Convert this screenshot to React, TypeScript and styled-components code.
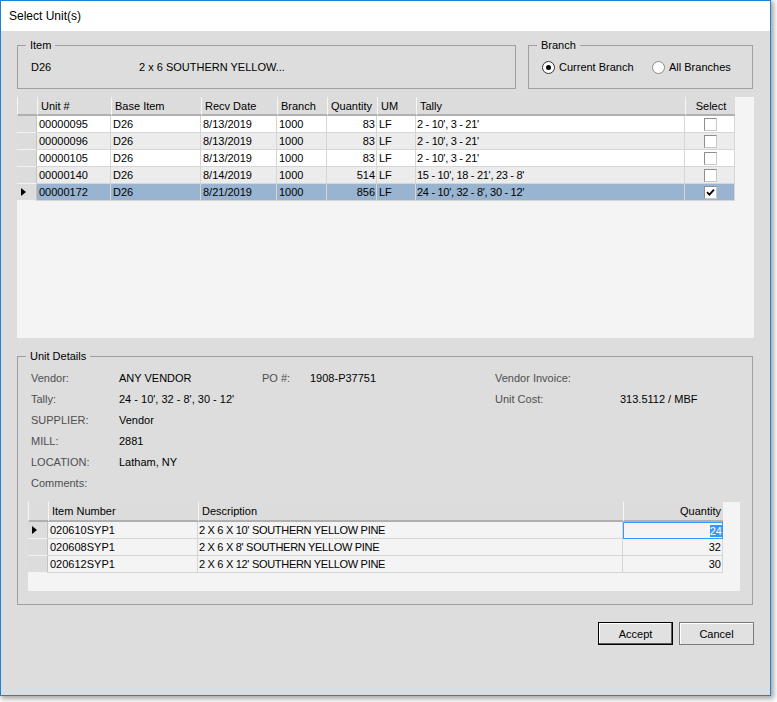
import styled, { createGlobalStyle } from "styled-components";

const GlobalStyle = createGlobalStyle`
  html, body {
    margin: 0;
    padding: 0;
    background: #ffffff;
  }
  body {
    font-family: "Liberation Sans", Arial, sans-serif;
    font-size: 11px;
    color: #000000;
  }
`;

type Tone = "white" | "alt" | "selected" | "light";

const TONES: Record<Tone, string> = {
  white: "#ffffff",
  alt: "#ececec",
  selected: "#99b4d1",
  light: "#f4f4f4",
};

const Screen = styled.div`
  width: 777px;
  height: 702px;
  background: #ffffff;
  overflow: hidden;
`;

const Window = styled.div`
  width: 771px;
  height: 696px;
  box-sizing: border-box;
  border: 1px solid #1883d7;
  background: #dddddd;
  display: flex;
  flex-direction: column;
  box-shadow: 2px 2px 5px 1px rgba(0, 0, 0, 0.35);
`;

const TitleBar = styled.div`
  height: 30px;
  flex: none;
  background: #ffffff;
  display: flex;
  align-items: center;
  padding-left: 8px;
  font-size: 12px;
`;

const Body = styled.div`
  flex: 1;
  padding: 8px 16px 0;
  display: flex;
  flex-direction: column;
`;

const TopRow = styled.div`
  display: flex;
  gap: 12px;
  margin-right: 1px;
`;

const Group = styled.fieldset<{ $height: number; $width?: number }>`
  margin: 0;
  padding: 0 11px 0 8px;
  min-width: 0;
  border: 1px solid #a0a0a0;
  box-sizing: border-box;
  height: ${(p) => p.$height}px;
  ${(p) => (p.$width ? `width: ${p.$width}px; flex: none;` : "flex: 1;")}
`;

const Caption = styled.legend`
  padding: 0 4px;
  line-height: 13px;
  font-size: 11px;
`;

const GroupLine = styled.div`
  height: 30px;
  display: flex;
  align-items: center;
  padding-left: 5px;
`;

const ItemCode = styled.span`
  width: 108px;
`;

const RadioOption = styled.label<{ $width?: number }>`
  display: flex;
  align-items: center;
  gap: 4px;
  ${(p) => (p.$width ? `width: ${p.$width}px;` : "")}
`;

const RadioCircle = styled.span<{ $on: boolean }>`
  width: 13px;
  height: 13px;
  box-sizing: border-box;
  border-radius: 50%;
  border: 1px solid ${(p) => (p.$on ? "#333333" : "#8a8a8a")};
  background: #ffffff;
  display: flex;
  align-items: center;
  justify-content: center;
  &::after {
    content: "";
    width: 5px;
    height: 5px;
    border-radius: 50%;
    background: ${(p) => (p.$on ? "#000000" : "transparent")};
  }
`;

const GridPanel = styled.div<{ $height: number; $width?: number }>`
  background: #f4f4f4;
  height: ${(p) => p.$height}px;
  ${(p) => (p.$width ? `width: ${p.$width}px;` : "")}
  overflow: hidden;
`;

const UnitPanel = styled(GridPanel)`
  margin-top: 8px;
`;

const DataGrid = styled.div<{ $cols: string; $head: number }>`
  display: grid;
  grid-template-columns: ${(p) => p.$cols};
  grid-template-rows: ${(p) => p.$head}px;
  grid-auto-rows: 17px;
  width: max-content;
`;

const HeadCell = styled.div<{ $align?: "left" | "right" | "center" }>`
  box-sizing: border-box;
  background: #dcdcdc;
  border-left: 1px solid #f6f6f6;
  border-bottom: 2px solid #b0b0b0;
  display: flex;
  align-items: center;
  padding: 0 2px 0 3px;
  white-space: nowrap;
  justify-content: ${(p) =>
    p.$align === "right" ? "flex-end" : p.$align === "center" ? "center" : "flex-start"};
`;

const RowHead = styled.div`
  box-sizing: border-box;
  background: #dcdcdc;
  border-bottom: 1px solid #f2f2f2;
  border-right: 1px solid #c4c4c4;
  display: flex;
  align-items: center;
  padding-left: 4px;
`;

const Pointer = styled.span`
  width: 0;
  height: 0;
  border-top: 4px solid transparent;
  border-bottom: 4px solid transparent;
  border-left: 5px solid #000000;
`;

const Cell = styled.div<{ $tone: Tone; $align?: "left" | "right" | "center"; $tight?: boolean }>`
  box-sizing: border-box;
  background: ${(p) => TONES[p.$tone]};
  border-right: 1px solid #d6d6d6;
  border-bottom: 1px solid #d6d6d6;
  display: flex;
  align-items: center;
  padding: 0 1px 0 ${(p) => (p.$tight ? 1 : 2)}px;
  white-space: nowrap;
  overflow: hidden;
  letter-spacing: ${(p) => (p.$tight ? "-0.3px" : "0")};
  justify-content: ${(p) =>
    p.$align === "right" ? "flex-end" : p.$align === "center" ? "center" : "flex-start"};
`;

const FocusCell = styled(Cell)`
  border: 1px solid #3399ff;
  padding-right: 0;
`;

const Highlight = styled.span`
  background: #3399ff;
  color: #ffffff;
`;

const CheckBox = styled.span`
  width: 13px;
  height: 13px;
  box-sizing: border-box;
  border: 1px solid #8e8e8e;
  border-right-color: #c8c8c8;
  border-bottom-color: #c8c8c8;
  background: #ffffff;
  display: flex;
  align-items: center;
  justify-content: center;
`;

const DetailsGroup = styled(Group)`
  margin-top: 12px;
  flex: none;
`;

const DetailsGrid = styled.div`
  display: grid;
  grid-template-columns: 88px 143px 48px 185px 125px 1fr;
  grid-auto-rows: 21px;
  align-items: center;
  padding: 4px 0 0 5px;
`;

const DetailLabel = styled.span`
  color: #4e4e4e;
  white-space: nowrap;
`;

const DetailValue = styled.span`
  color: #000000;
  white-space: nowrap;
`;

const LinePanel = styled(GridPanel)`
  margin: 9px 0 0 2px;
`;

const Footer = styled.div`
  margin-top: 17px;
  display: flex;
  justify-content: flex-end;
  gap: 6px;
`;

const Button = styled.button<{ $default?: boolean }>`
  width: 75px;
  height: 23px;
  box-sizing: border-box;
  margin: 0;
  padding: 0;
  font-family: "Liberation Sans", Arial, sans-serif;
  font-size: 11px;
  color: #000000;
  background: #e1e1e1;
  border: 1px solid ${(p) => (p.$default ? "#000000" : "#7a7a7a")};
  box-shadow: ${(p) =>
    p.$default ? "inset -1px -1px 0 #5a5a5a, inset 1px 1px 0 #ffffff" : "inset 1px 1px 0 #ffffff"};
`;

interface Unit {
  unit: string;
  base: string;
  date: string;
  branch: string;
  qty: number;
  um: string;
  tally: string;
  picked: boolean;
}

const units: Unit[] = [
  { unit: "00000095", base: "D26", date: "8/13/2019", branch: "1000", qty: 83, um: "LF", tally: "2 - 10', 3 - 21'", picked: false },
  { unit: "00000096", base: "D26", date: "8/13/2019", branch: "1000", qty: 83, um: "LF", tally: "2 - 10', 3 - 21'", picked: false },
  { unit: "00000105", base: "D26", date: "8/13/2019", branch: "1000", qty: 83, um: "LF", tally: "2 - 10', 3 - 21'", picked: false },
  { unit: "00000140", base: "D26", date: "8/14/2019", branch: "1000", qty: 514, um: "LF", tally: "15 - 10', 18 - 21', 23 - 8'", picked: false },
  { unit: "00000172", base: "D26", date: "8/21/2019", branch: "1000", qty: 856, um: "LF", tally: "24 - 10', 32 - 8', 30 - 12'", picked: true },
];

const CURRENT_UNIT = 4;

const lines = [
  { item: "020610SYP1", desc: "2 X 6 X 10' SOUTHERN YELLOW PINE", qty: 24 },
  { item: "020608SYP1", desc: "2 X 6 X 8' SOUTHERN YELLOW PINE", qty: 32 },
  { item: "020612SYP1", desc: "2 X 6 X 12' SOUTHERN YELLOW PINE", qty: 30 },
];

const details: string[][] = [
  ["Vendor:", "ANY VENDOR", "PO #:", "1908-P37751", "Vendor Invoice:", ""],
  ["Tally:", "24 - 10', 32 - 8', 30 - 12'", "", "", "Unit Cost:", "313.5112 / MBF"],
  ["SUPPLIER:", "Vendor", "", "", "", ""],
  ["MILL:", "2881", "", "", "", ""],
  ["LOCATION:", "Latham, NY", "", "", "", ""],
  ["Comments:", "", "", "", "", ""],
];

const Check = () => (
  <svg width="9" height="9" viewBox="0 0 9 9">
    <path d="M1 4.2 L3.4 6.6 L8 1.6" fill="none" stroke="#000" strokeWidth="1.8" />
  </svg>
);

const toneFor = (i: number): Tone => (i === CURRENT_UNIT ? "selected" : i % 2 === 0 ? "white" : "alt");

const App = () => {
  return (
    <Screen>
      <GlobalStyle />
      <Window>
        <TitleBar>Select Unit(s)</TitleBar>
        <Body>
          <TopRow>
            <Group $height={50}>
              <Caption>Item</Caption>
              <GroupLine>
                <ItemCode>D26</ItemCode>
                <span>2 x 6 SOUTHERN YELLOW...</span>
              </GroupLine>
            </Group>
            <Group $height={50} $width={225}>
              <Caption>Branch</Caption>
              <GroupLine>
                <RadioOption $width={110}>
                  <RadioCircle $on={true} />
                  Current Branch
                </RadioOption>
                <RadioOption>
                  <RadioCircle $on={false} />
                  All Branches
                </RadioOption>
              </GroupLine>
            </Group>
          </TopRow>

          <UnitPanel $height={241}>
            <DataGrid $cols="20px 74px 90px 76px 50px 50px 39px 269px 50px" $head={19}>
              <HeadCell />
              <HeadCell>Unit #</HeadCell>
              <HeadCell>Base Item</HeadCell>
              <HeadCell>Recv Date</HeadCell>
              <HeadCell>Branch</HeadCell>
              <HeadCell>Quantity</HeadCell>
              <HeadCell>UM</HeadCell>
              <HeadCell>Tally</HeadCell>
              <HeadCell $align="center">Select</HeadCell>
              {units.map((u, i) => {
                const tone = toneFor(i);
                return [
                  <RowHead key={`h${i}`}>{i === CURRENT_UNIT && <Pointer />}</RowHead>,
                  <Cell key={`u${i}`} $tone={tone}>{u.unit}</Cell>,
                  <Cell key={`b${i}`} $tone={tone}>{u.base}</Cell>,
                  <Cell key={`d${i}`} $tone={tone}>{u.date}</Cell>,
                  <Cell key={`r${i}`} $tone={tone}>{u.branch}</Cell>,
                  <Cell key={`q${i}`} $tone={tone} $align="right">{u.qty}</Cell>,
                  <Cell key={`m${i}`} $tone={tone}>{u.um}</Cell>,
                  <Cell key={`t${i}`} $tone={tone} $tight>{u.tally}</Cell>,
                  <Cell key={`s${i}`} $tone={tone} $align="center">
                    <CheckBox>{u.picked && <Check />}</CheckBox>
                  </Cell>,
                ];
              })}
            </DataGrid>
          </UnitPanel>

          <DetailsGroup $height={255} $width={736}>
            <Caption>Unit Details</Caption>
            <DetailsGrid>
              {details.map((row, r) =>
                row.map((text, c) =>
                  c % 2 === 0 ? (
                    <DetailLabel key={`${r}-${c}`}>{text}</DetailLabel>
                  ) : (
                    <DetailValue key={`${r}-${c}`}>{text}</DetailValue>
                  )
                )
              )}
            </DetailsGrid>
            <LinePanel $height={89} $width={712}>
              <DataGrid $cols="20px 150px 425px 100px" $head={20}>
                <HeadCell />
                <HeadCell>Item Number</HeadCell>
                <HeadCell>Description</HeadCell>
                <HeadCell $align="right">Quantity</HeadCell>
                {lines.map((l, i) => [
                  <RowHead key={`h${i}`}>{i === 0 && <Pointer />}</RowHead>,
                  <Cell key={`i${i}`} $tone="light">{l.item}</Cell>,
                  <Cell key={`d${i}`} $tone="light" $tight>{l.desc}</Cell>,
                  i === 0 ? (
                    <FocusCell key={`q${i}`} $tone="light" $align="right">
                      <Highlight>{l.qty}</Highlight>
                    </FocusCell>
                  ) : (
                    <Cell key={`q${i}`} $tone="light" $align="right">{l.qty}</Cell>
                  ),
                ])}
              </DataGrid>
            </LinePanel>
          </DetailsGroup>

          <Footer>
            <Button $default>Accept</Button>
            <Button>Cancel</Button>
          </Footer>
        </Body>
      </Window>
    </Screen>
  );
};

export default App;
